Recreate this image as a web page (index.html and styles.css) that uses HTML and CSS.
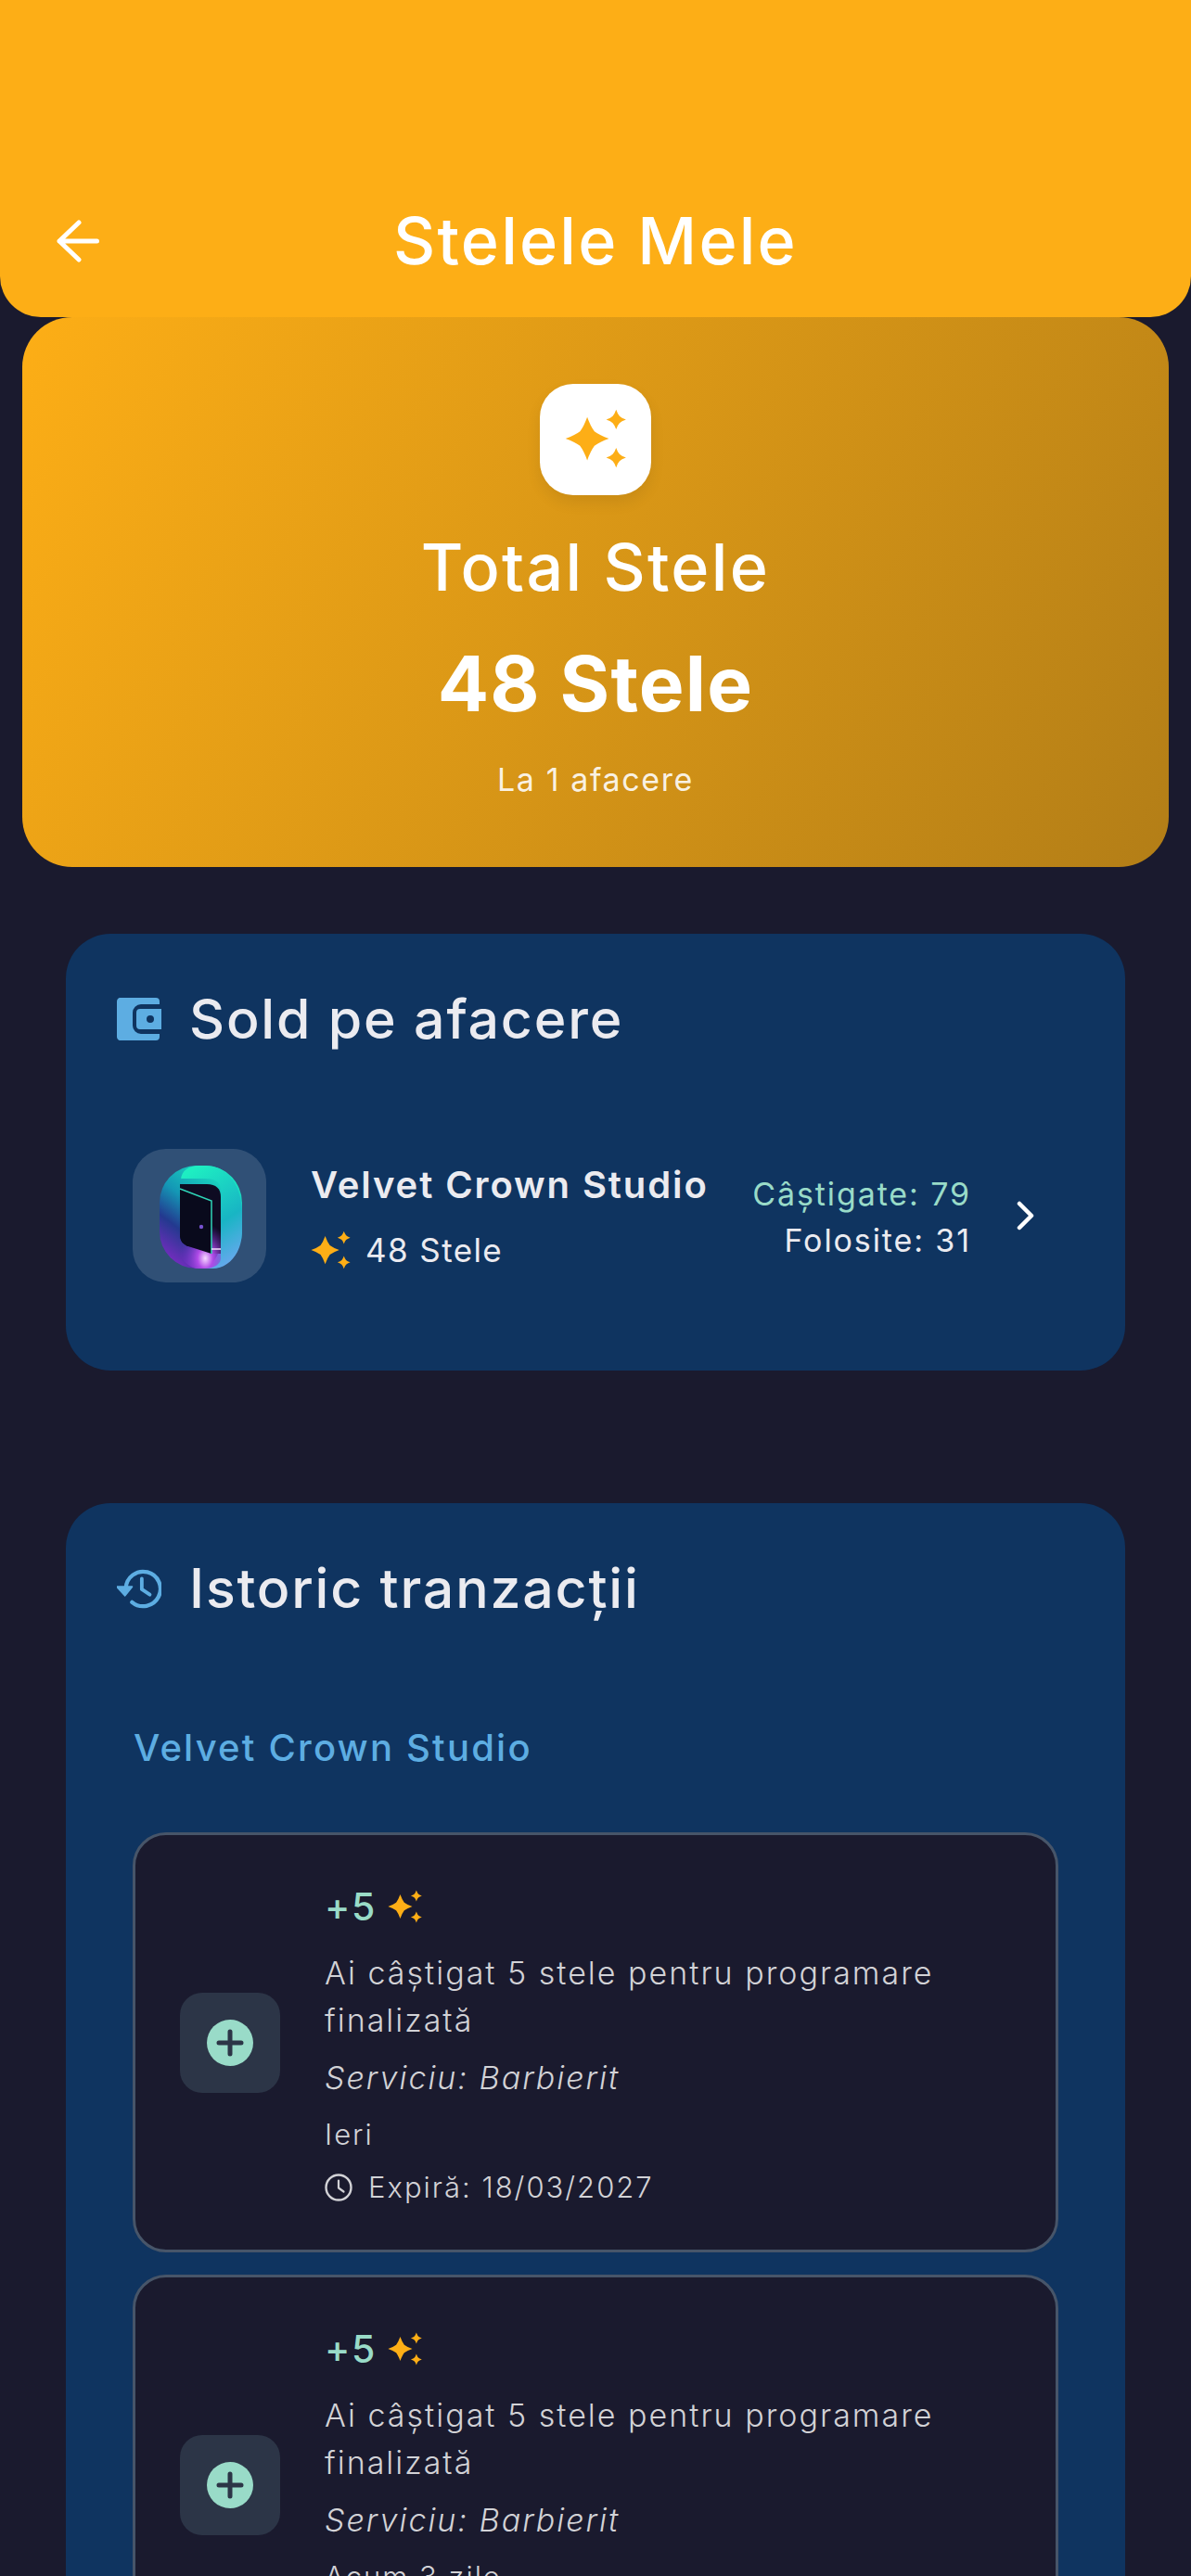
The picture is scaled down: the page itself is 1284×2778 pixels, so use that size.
FILE: index.html
```html
<!DOCTYPE html>
<html lang="ro">
<head>
<meta charset="utf-8">
<title>Stelele Mele</title>
<link rel="stylesheet" href="styles.css">
</head>
<body>
<svg class="defs" width="0" height="0" aria-hidden="true">
  <symbol id="sparkle" viewBox="0 0 48 48">
    <path d="M17 7.500 Q19.500 14.500 22.500 18.500 Q26.500 21.500 33.500 24 Q26.500 26.500 22.500 29.500 Q19.500 33.500 17 40.500 Q14.500 33.500 11.500 29.500 Q7.500 26.500 .5 24 Q7.500 21.500 11.500 18.500 Q14.500 14.500 17 7.500Z"/>
    <path d="M39 2 Q40.200 5.500 41.600 6.900 Q43 8.300 46.500 9.500 Q43 10.700 41.600 12.100 Q40.200 13.500 39 17 Q37.800 13.500 36.400 12.100 Q35 10.700 31.500 9.500 Q35 8.300 36.400 6.900 Q37.800 5.500 39 2Z"/>
    <path d="M39 31 Q40.200 34.500 41.600 35.900 Q43 37.300 46.500 38.500 Q43 39.700 41.600 41.100 Q40.200 42.500 39 46 Q37.800 42.500 36.400 41.100 Q35 39.700 31.500 38.500 Q35 37.300 36.400 35.900 Q37.800 34.500 39 31Z"/>
  </symbol>
  <symbol id="plus-circle" viewBox="0 0 50 50">
    <circle cx="25" cy="25" r="25" fill="#99dbc8"/>
    <path d="M25 13V37M13 25H37" stroke="#2c3547" stroke-width="5" stroke-linecap="round"/>
  </symbol>
  <symbol id="clock" viewBox="0 0 30 30">
    <circle cx="15" cy="15" r="13.500" fill="none" stroke="currentColor" stroke-width="2.400"/>
    <path d="M15 7.500V15.500L20.500 19.500" fill="none" stroke="currentColor" stroke-width="2.200" stroke-linecap="round" stroke-linejoin="round"/>
  </symbol>
  <linearGradient id="ring" x1="0.8" y1="0" x2="0.2" y2="1">
    <stop offset="0" stop-color="#1cf0c4"/>
    <stop offset="0.45" stop-color="#1497b5"/>
    <stop offset="0.7" stop-color="#23398f"/>
    <stop offset="1" stop-color="#7d2bc4"/>
  </linearGradient>
  <linearGradient id="front" x1="0.3" y1="0" x2="0.7" y2="1">
    <stop offset="0" stop-color="#1eeec2"/>
    <stop offset="0.6" stop-color="#18b5c4"/>
    <stop offset="1" stop-color="#67a8ee"/>
  </linearGradient>
  <radialGradient id="glow" cx="0.62" cy="0.8" r="0.62">
    <stop offset="0" stop-color="#f6d8ff"/>
    <stop offset="0.3" stop-color="#b14be8"/>
    <stop offset="1" stop-color="#6c2bc4" stop-opacity="0"/>
  </radialGradient>
  <clipPath id="inner"><path d="M51 70H95V118C95 124 88 129 78 129H68C58 126 51 118 51 110Z"/></clipPath>
</svg>

<div class="screen">
  <header class="topbar">
    <button class="back" aria-label="Înapoi">
      <svg width="50" height="46" viewBox="0 0 50 46"><path d="M25 3 4 23 25 43M4 23H44.500" fill="none" stroke="#fff" stroke-width="5" stroke-linecap="round" stroke-linejoin="round"/></svg>
    </button>
    <h1 class="topbar-title">Stelele Mele</h1>
  </header>

  <section class="hero">
    <div class="hero-icon"><svg class="spark-hero"><use href="#sparkle"/></svg></div>
    <div class="hero-label">Total Stele</div>
    <div class="hero-value">48 Stele</div>
    <div class="hero-sub">La 1 afacere</div>
  </section>

  <section class="card card-sold">
    <div class="card-head">
      <svg class="head-icon" width="48" height="46" viewBox="0 0 48 46">
        <path d="M5 0H42a4 4 0 0 1 4 4V7H26a9 9 0 0 0-9 9V30a9 9 0 0 0 9 9H46v3a4 4 0 0 1-4 4H5a4 4 0 0 1-5-4V4a4 4 0 0 1 5-4Z" fill="#5dade2"/>
        <path d="M25 12H48V34H25a4 4 0 0 1-4-4V16a4 4 0 0 1 4-4Zm7 11a4 4 0 1 0 8 0 4 4 0 1 0-8 0Z" fill="#5dade2" fill-rule="evenodd"/>
      </svg>
      <h2 class="card-title">Sold pe afacere</h2>
    </div>
    <div class="biz-row">
      <div class="biz-logo">
        <svg width="144" height="144" viewBox="0 0 144 144">
          <rect x="29" y="18" width="89" height="111" rx="40" fill="url(#ring)"/>
          <path d="M52 34C52 24 60 18 72 18H78C104 18 118 40 118 72V88C118 112 104 129 86 129H78C90 122 95 110 95 96V46C95 36 90 32 78 32H52Z" fill="url(#front)"/>
          <path d="M51 38H80C90 38 95 43 95 52V113H85L60 105C54 103 51 99 51 92Z" fill="#0e0b22"/>
          <rect x="51" y="70" width="44" height="60" fill="url(#glow)" clip-path="url(#inner)"/>
          <path d="M51 43 85 56V113L60 105C54 103 51 99 51 92Z" fill="#090a1c"/>
          <path d="M51 43 85 56V113" fill="none" stroke="#2fd5b8" stroke-width="1.500"/>
          <path d="M85 108H95" stroke="#f7e3ff" stroke-width="1.500"/>
          <circle cx="74" cy="84" r="2.200" fill="#7752d0"/>
        </svg>
      </div>
      <div class="biz-info">
        <div class="biz-name">Velvet Crown Studio</div>
        <div class="biz-balance"><svg class="spark-44"><use href="#sparkle"/></svg><span>48 Stele</span></div>
      </div>
      <div class="biz-stats">
        <div class="stat-earned">Câștigate: 79</div>
        <div class="stat-used">Folosite: 31</div>
      </div>
      <svg class="chevron" width="22" height="32" viewBox="0 0 22 32"><path d="M4 3 17 16 4 29" fill="none" stroke="#fff" stroke-width="4.500" stroke-linecap="round" stroke-linejoin="round"/></svg>
    </div>
  </section>

  <section class="card card-history">
    <div class="card-head">
      <svg class="head-icon" width="48" height="44" viewBox="0 0 50 46">
        <path d="M10 23A19.500 19.500 0 1 1 17 38.500" fill="none" stroke="#5dade2" stroke-width="4.500" stroke-linecap="round"/>
        <path d="M0 21H17L9 31Z" fill="#5dade2" stroke="#5dade2" stroke-width="2" stroke-linejoin="round"/>
        <path d="M28 12V24L37 30" fill="none" stroke="#5dade2" stroke-width="4" stroke-linecap="round" stroke-linejoin="round"/>
      </svg>
      <h2 class="card-title">Istoric tranzacții</h2>
    </div>
    <h3 class="group-name">Velvet Crown Studio</h3>
    <div class="tx-list">
      <article class="tx">
        <div class="tx-icon"><svg width="50" height="50"><use href="#plus-circle"/></svg></div>
        <div class="tx-body">
          <div class="tx-amount"><span>+5</span><svg class="spark-38"><use href="#sparkle"/></svg></div>
          <p class="tx-desc">Ai câștigat 5 stele pentru programare finalizată</p>
          <p class="tx-service">Serviciu: Barbierit</p>
          <p class="tx-date">Ieri</p>
          <p class="tx-expiry"><svg width="30" height="30"><use href="#clock"/></svg><span>Expiră: 18/03/2027</span></p>
        </div>
      </article>
      <article class="tx">
        <div class="tx-icon"><svg width="50" height="50"><use href="#plus-circle"/></svg></div>
        <div class="tx-body">
          <div class="tx-amount"><span>+5</span><svg class="spark-38"><use href="#sparkle"/></svg></div>
          <p class="tx-desc">Ai câștigat 5 stele pentru programare finalizată</p>
          <p class="tx-service">Serviciu: Barbierit</p>
          <p class="tx-date">Acum 3 zile</p>
          <p class="tx-expiry"><svg width="30" height="30"><use href="#clock"/></svg><span>Expiră: 18/03/2027</span></p>
        </div>
      </article>
    </div>
  </section>
</div>
</body>
</html>
```
FILE: styles.css
```css
* { box-sizing: border-box; }
html, body { margin: 0; padding: 0; }
body { background: #1a1a2e; font-family: Inter, "Noto Sans", sans-serif; color: #fff; font-optical-sizing: none; }
.defs { position: absolute; }
h1, h2, h3, p { margin: 0; font-weight: inherit; }

.screen { height: 2778px; overflow: hidden; display: flex; flex-direction: column; }

.topbar { flex: none; height: 342px; background: #fdae16; border-radius: 0 0 44px 44px; display: flex; align-items: flex-end; justify-content: center; padding-bottom: 43px; position: relative; }
.back { position: absolute; left: 60px; top: 237px; padding: 0; border: 0; background: none; line-height: 0; }
.topbar-title { font-size: 70px; line-height: 78px; font-weight: 550; letter-spacing: 2.2px; }

.hero { flex: none; margin: 0 24px; height: 593px; border-radius: 54px; background: linear-gradient(120deg, #fdae16 0%, #b37e17 100%); display: flex; flex-direction: column; align-items: center; padding-top: 72px; }
.hero-icon { width: 120px; height: 120px; border-radius: 36px; background: #fff; display: flex; align-items: center; justify-content: center; box-shadow: 0 8px 16px rgba(0,0,0,.08); fill: #fdae16; }
.spark-hero { width: 68px; height: 68px; margin: -2px 0 0 2px; }
.hero-label { margin-top: 39px; font-size: 70px; line-height: 78px; font-weight: 550; letter-spacing: 2.3px; }
.hero-value { margin-top: 45px; font-size: 82px; line-height: 84px; font-weight: 700; letter-spacing: 1.2px; }
.hero-sub { margin-top: 39px; font-size: 34px; line-height: 44px; letter-spacing: 1.6px; color: rgba(255,255,255,.9); }

.card { flex: none; margin: 72px 71px 0; background: #0f3460; border-radius: 48px; padding: 48px 72px 0; }
.card-sold { height: 471px; }
.card-history { margin-top: 143px; }
.card-head { display: flex; align-items: center; margin-left: -17px; gap: 30px; height: 88px; }
.head-icon { flex: none; }
.card-title { font-size: 59px; line-height: 68px; font-weight: 550; letter-spacing: 1.8px; color: #ebebf0; }

.biz-row { margin-top: 96px; display: flex; align-items: center; }
.biz-logo { flex: none; width: 144px; height: 144px; border-radius: 36px; background: rgba(255,255,255,.14); line-height: 0; }
.biz-info { margin-left: 48px; flex: 1; min-width: 0; padding-top: 2px; }
.biz-name { font-size: 40px; line-height: 48px; font-weight: 600; letter-spacing: 1.9px; color: #ebebf0; white-space: nowrap; }
.biz-balance { margin-top: 24px; display: flex; align-items: center; gap: 15px; font-size: 35px; line-height: 44px; letter-spacing: 1.4px; color: #ebebf0; }
.spark-44 { width: 44px; height: 44px; fill: #fdae16; flex: none; }
.spark-38 { width: 38px; height: 38px; fill: #fdae16; flex: none; }
.biz-stats { flex: none; text-align: right; font-size: 34px; line-height: 50px; letter-spacing: 1.9px; padding-top: 3px; }
.stat-earned { color: #99dbc8; }
.stat-used { color: #ebebf0; }
.chevron { flex: none; margin-left: 48px; margin-right: 24px; }

.group-name { margin-top: 104px; font-size: 40px; line-height: 48px; font-weight: 500; letter-spacing: 2.2px; color: #5dade2; margin-left: 1px; }
.tx-list { margin-top: 67px; display: flex; flex-direction: column; gap: 24px; }
.tx { height: 453px; flex: none; background: #1a1a2e; border: 3px solid #475569; border-radius: 36px; display: flex; align-items: center; padding-left: 48px; }
.tx-icon { flex: none; width: 108px; height: 108px; border-radius: 24px; background: #2c3547; display: flex; align-items: center; justify-content: center; }
.tx-body { margin-left: 48px; flex: 1; min-width: 0; padding: 6px 60px 0 0; color: #d2d2d6; font-size: 34px; font-weight: 300; letter-spacing: 2px; }
.tx-amount { display: flex; align-items: center; gap: 12px; font-size: 41px; line-height: 48px; font-weight: 500; letter-spacing: 1.6px; color: #99dbc8; }
.tx-desc { margin-top: 22px; line-height: 51px; }
.tx-service { margin-top: 14px; line-height: 46px; font-style: italic; }
.tx-date { margin-top: 17px; font-size: 31px; line-height: 42px; }
.tx-expiry { margin-top: 15px; display: flex; align-items: center; gap: 17px; font-size: 31px; line-height: 42px; }
```
